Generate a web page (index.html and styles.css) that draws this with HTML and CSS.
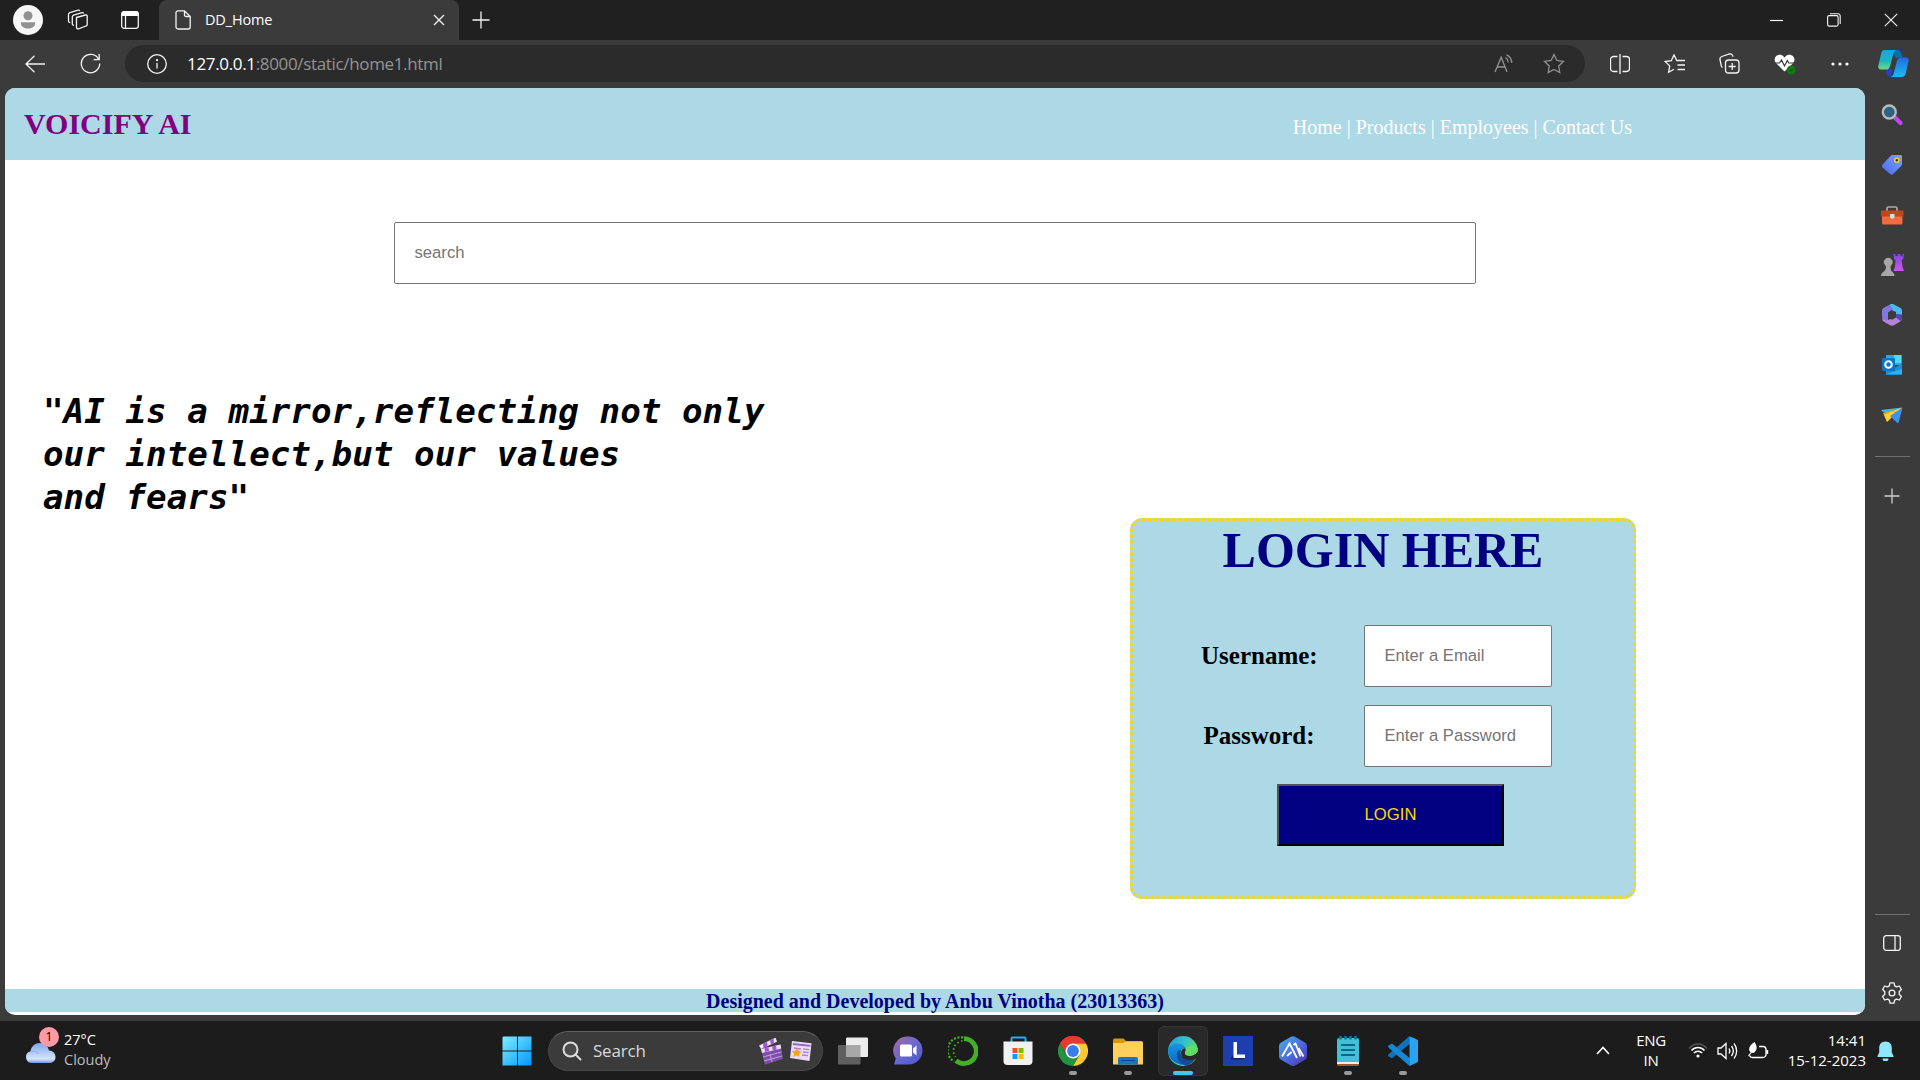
FILE: index.html
```html
<!DOCTYPE html>
<html lang="en">
<head>
<meta charset="utf-8">
<title>DD_Home</title>
<link rel="stylesheet" href="styles.css">
</head>
<body>
<div class="titlebar">
  <div class="tb-cell avatar"><svg width="30" height="30" viewBox="0 0 30 30"><circle cx="15" cy="15" r="15" fill="#f7f7f7"/><circle cx="15" cy="10.7" r="4.5" fill="#919191"/><path d="M8 17.3h14v1.2c0 3.300-3.100 5-7 5s-7-1.700-7-5z" fill="#919191"/></svg></div>
  <div class="tb-cell spaces"><svg width="22" height="22" viewBox="0 0 22 22" class="line"><path d="M9.500 8.500l9-2.500c1-.2 1.700.2 1.700 1.200v8.300c0 .8-.4 1.300-1.200 1.500l-7.500 2.800c-1 .3-2-.2-2-1.200z"/><path d="M7 16.500l-.8-.3c-.7-.2-.9-.7-.9-1.400V8c0-1 .4-1.600 1.300-1.900l8.400-2.400c.8-.2 1.400.1 1.700.8"/><path d="M3.300 13.700l-.9-.4c-.7-.2-.9-.7-.9-1.300V5.500c0-1 .4-1.500 1.300-1.800L11 1.200c.8-.2 1.400 0 1.800.7"/></svg></div>
  <div class="tb-cell actions"><svg width="18" height="18" viewBox="0 0 18 18"><rect x=".7" y=".7" width="16.600" height="16.600" rx="2.500" class="line"/><path d="M.5 2.500A2 2 0 012.500.3h13a2 2 0 012 2.200V5H.5z" fill="#fff"/><path d="M4.500 5v12" class="line"/></svg></div>
  <div class="tab">
    <svg width="16" height="20" viewBox="0 0 16 20" class="line"><path d="M3 .8h6.500l5.700 5.700V17a2 2 0 01-2 2H3a2 2 0 01-2-2V2.800a2 2 0 012-2zM9.500.8V5a1.500 1.500 0 001.500 1.500h4.200"/></svg>
    <span class="tab-title">DD_Home</span>
    <svg width="12" height="12" viewBox="0 0 12 12" class="line"><path d="M1 1l10 10M11 1L1 11"/></svg>
  </div>
  <div class="newtab"><svg width="18" height="18" viewBox="0 0 18 18" class="line"><path d="M9 .5v17M.5 9h17"/></svg></div>
  <div class="win"><svg width="13" height="13" viewBox="0 0 13 13"><path d="M0 6.500h13" stroke="#fff" stroke-width="1.200"/></svg></div>
  <div class="win"><svg width="14" height="14" viewBox="0 0 14 14" class="line thin"><rect x=".6" y="2.600" width="10.500" height="10.500" rx="1.500"/><path d="M3 .8h8a2.200 2.200 0 012.200 2.200v8"/></svg></div>
  <div class="win"><svg width="14" height="14" viewBox="0 0 14 14" class="line thin"><path d="M.8.8l12.400 12.400M13.200.8L.8 13.200"/></svg></div>
</div>

<div class="toolbar">
  <div class="nav-cell back"><svg width="20" height="18" viewBox="0 0 20 18" class="line"><path d="M20 9H1M9.500.8L1 9l8.500 8.200"/></svg></div>
  <div class="nav-cell reload"><svg width="21" height="21" viewBox="0 0 21 21" class="line"><path d="M18.800 6.600A9.200 9.200 0 1019.700 10.500M19.200 1v5.600h-5.600"/></svg></div>
  <div class="address">
    <svg width="20" height="20" viewBox="0 0 20 20" class="line"><circle cx="10" cy="10" r="9.300"/><path d="M10 9v5.500"/><circle cx="10" cy="6.200" r=".5" fill="#fff"/></svg>
    <span class="url">127.0.0.1<span class="dim">:8000/static/home1.html</span></span>
    <div class="addr-icon"><svg width="20" height="20" viewBox="0 0 20 20" class="line grey"><path d="M1 18L7.200 3.200 13 18M3 13h8"/><path d="M11.500 3.500c1.800 1 2.600 2.500 2.800 5M12.500.8c3.300 1.400 5 4 5.300 7.800" /></svg></div>
    <div class="addr-icon"><svg width="22" height="21" viewBox="0 0 22 21" class="line grey"><path d="M11 1.500l2.900 6 6.500.9-4.700 4.600 1.100 6.500L11 16.400l-5.800 3.100 1.100-6.500L1.600 8.400l6.500-.9z"/></svg></div>
  </div>
  <div class="tools">
    <div class="tool"><svg width="20" height="20" viewBox="0 0 20 20" class="line"><path d="M7.500 2.500h-4a3 3 0 00-3 3v9a3 3 0 003 3h4M12.500 2.500h4a3 3 0 013 3v9a3 3 0 01-3 3h-4M10 0v20"/></svg></div>
    <div class="tool"><svg width="22" height="20" viewBox="0 0 22 20" class="line"><path d="M14 6.500h-1.200L10 .9 7.300 6.700l-6.200.8 4.600 4.400-1.100 6.400L10 15.200M14 6.500h7M13.500 11h7.500M13.500 15.500h7.500"/></svg></div>
    <div class="tool"><svg width="21" height="21" viewBox="0 0 21 21" class="line"><rect x="6.500" y="7" width="13.500" height="13" rx="3"/><path d="M13.200 10v7M9.700 13.500h7M3.500 14.500c-.8-.4-1-1-1.200-1.600L1 6.500C.7 5 1.400 4 2.800 3.500L10.500 1c1.600-.4 2.600.2 3.100 1.600l.4 1.200"/></svg></div>
    <div class="tool"><svg width="22" height="22" viewBox="0 0 22 22"><path d="M10.500 18.500L2.200 10.300A5 5 0 012 3.200c2-2 5.500-2 7.300 0l1.200 1.200 1.200-1.200c2-2 5.300-2 7.300 0a5 5 0 010 7.100z" fill="#fff"/><path d="M0 10h5.500l2-3 3 6 2.800-5.500 1.500 2.500h6" fill="none" stroke="#3b3b3b" stroke-width="1.200"/><circle cx="17.300" cy="17" r="4.500" fill="#107c10"/><path d="M15.300 17l1.500 1.500 2.700-3" stroke="#174f17" fill="none"/></svg></div>
    <div class="tool"><svg width="18" height="4" viewBox="0 0 18 4" fill="#fff"><circle cx="2" cy="2" r="1.600"/><circle cx="9" cy="2" r="1.600"/><circle cx="16" cy="2" r="1.600"/></svg></div>
    <div class="tool"><svg width="31" height="27" viewBox="0 0 31 27"><defs><linearGradient id="cpA" x1="0" y1="0" x2="0" y2="1"><stop offset="0" stop-color="#13a5e6"/><stop offset=".55" stop-color="#1db6bd"/><stop offset="1" stop-color="#6ddb86"/></linearGradient><linearGradient id="cpB" x1="0" y1="0" x2="0" y2="1"><stop offset="0" stop-color="#2169e0"/><stop offset="1" stop-color="#16bdf5"/></linearGradient></defs><path d="M15 0h4.500c2 0 3 1 3.500 3l1.500 4-7 1z" fill="#0b6fae"/><path d="M8.500 18l6 1-2 7.500c-2 0-3.500-.5-4-2.500z" fill="#1a46c9"/><path d="M6.500 0H18c-1.700 1-2.400 3-3 5.200l-3 11c-.8 2.600-1.800 3.300-4 3.300H3c-2.500 0-3.200-2-2.500-4.500L3 4C3.600 1.400 4.500 0 6.500 0z" fill="url(#cpA)"/><path d="M23 7.500h5c2.300 0 3 1.500 2.500 4l-2.500 11c-.7 3-2 4.500-4.500 4.500H12.500c2.300-.8 3-2.500 3.600-5l2.700-10.500c.7-2.800 1.800-4 4.200-4z" fill="url(#cpB)"/></svg></div>
  </div>
</div>

<div class="workarea">
  <main class="page">
    <header class="site-head">
      <h1 class="brand">VOICIFY AI</h1>
      <nav class="menu">Home | Products | Employees | Contact Us</nav>
    </header>
    <input class="field search" placeholder="search">
    <p class="quote">"AI is a mirror,reflecting not only<br>our intellect,but our values<br>and fears"</p>
    <form class="login">
      <h2 class="login-title">LOGIN HERE</h2>
      <div class="row"><label class="label">Username:</label><input class="field entry" placeholder="Enter a Email"></div>
      <div class="row"><label class="label">Password:</label><input class="field entry" placeholder="Enter a Password"></div>
      <button class="submit" type="button">LOGIN</button>
    </form>
    <footer class="site-foot">Designed and Developed by Anbu Vinotha (23013363)</footer>
  </main>
  <aside class="sidebar">
    <div class="side"><svg width="22" height="22" viewBox="0 0 22 22"><path d="M14 13.500l5.500 5.500" stroke="#bf45f5" stroke-width="4.200" stroke-linecap="round"/><circle cx="8.300" cy="8" r="6.500" fill="#2b6385" stroke="#b9b9b9" stroke-width="2.300"/></svg></div>
    <div class="side"><svg width="22" height="22" viewBox="0 0 22 22"><defs><linearGradient id="tag" x1="1" y1="0" x2="0" y2="1"><stop offset="0" stop-color="#6cabff"/><stop offset="1" stop-color="#5262ef"/></linearGradient></defs><path d="M11.500 1h7.800c1 0 1.700.7 1.700 1.700v7c0 1-.2 1.500-.9 2.200l-8 8c-1 1-2 1-3 0l-7.500-6.500c-1-1-1-2 0-3L9.500 2c.6-.7 1.100-1 2-1z" fill="url(#tag)"/><circle cx="15.800" cy="6.300" r="2" fill="#333" stroke="#f5cf1c" stroke-width="1.600"/></svg></div>
    <div class="side"><svg width="24" height="20" viewBox="0 0 24 20"><path d="M7 6V3.500A1.500 1.500 0 018.500 2h7A1.500 1.500 0 0117 3.500V6" fill="none" stroke="#aaa" stroke-width="1.700"/><rect x="2" y="7" width="20.500" height="12.500" rx="1.500" fill="#ef6c43"/><rect x="1" y="5.500" width="22.500" height="6" rx="1" fill="#cb4318"/><path d="M10 9h4.500v3.500L12.200 14 10 12.500z" fill="#ddd"/></svg></div>
    <div class="side"><svg width="24" height="24" viewBox="0 0 24 24"><defs><linearGradient id="rook" x1="0" y1="0" x2="0" y2="1"><stop offset="0" stop-color="#7f45d7"/><stop offset="1" stop-color="#ca57f7"/></linearGradient></defs><path d="M13.500 1h2v2h2V1h3v2h2V1H24l-.8 5-1.400 1 .7 7 1.500 4H13.500l1.500-4 .5-7-1.500-1z" fill="url(#rook)"/><path d="M5 12a4.300 4.300 0 116.500 0l-1 1.500c0 3 .6 4.500 2.300 6 1.200 1 1.700 1.800 1.700 3.500H1c0-1.700.5-2.500 1.700-3.500C5 18 6 16.500 6 13.500z" fill="#a7a7a7"/></svg></div>
    <div class="side"><svg width="22" height="22" viewBox="0 0 22 22"><path d="M9 .5c1.300-.6 2.700-.6 4 0L19.500 4C20.500 4.600 21 5.500 21 7v7.500l-6-3V8L8 5z" fill="#49b9f0"/><path d="M9 .5L12 5l-5 3.500V17c-3.500 0-6-2-6-5V7c0-1.300.5-2.300 1.500-2.900z" fill="#8078dc"/><path d="M1 13c1 3 4 4.300 7.500 2.500l6.500-4 6 3c0 1.500-.6 2.400-1.800 3L13 21.300c-1.300.6-2.700.6-4 0L2.500 17.500C1.500 16.800 1 15.500 1 13z" fill="#b284d5"/><path d="M15 10l6 .5V14c0 1.500-.6 2.400-1.500 3L15 13.500z" fill="#5b43ae"/><path d="M11 7l4 2.300v4.200L11 15.800l-3.700-2.300V9.300z" fill="#3b3b3b"/></svg></div>
    <div class="side"><svg width="22" height="22" viewBox="0 0 22 22"><path d="M5 1h15.500v10H5z" fill="#28a8ea"/><path d="M13 1h7.500v8H13z" fill="#50d9ff"/><path d="M5 11l8 3 8-4.500V20.500H5z" fill="#1490df"/><path d="M4 20.500h17V15z" fill="#28b5f4"/><rect x="1" y="4" width="13" height="13" rx="1.200" fill="#0875cf"/><circle cx="7.500" cy="10.500" r="3.300" fill="none" stroke="#fff" stroke-width="2"/></svg></div>
    <div class="side"><svg width="24" height="20" viewBox="0 0 24 20"><path d="M1 5l21-2.500L9 12z" fill="#38b8ef"/><path d="M3 8L22 3 7 11v6z" fill="#d89b0a"/><path d="M4 9.500l18-7L7 17z" fill="#ffce33"/><path d="M22.500 2.500L10 11l7 6.800c1 .4 1.500.2 1.800-.8z" fill="#3b93ef"/></svg></div>
    <div class="rule first"></div>
    <div class="side add"><svg width="16" height="16" viewBox="0 0 16 16" class="line pale"><path d="M8 .5v15M.5 8h15"/></svg></div>
    <div class="rule second"></div>
    <div class="side"><svg width="18" height="16" viewBox="0 0 18 16" class="line"><rect x=".7" y=".7" width="16.600" height="14.600" rx="2.500"/><path d="M12 .7v14.600"/></svg></div>
    <div class="side"><svg width="22" height="22" viewBox="0 0 22 22" class="line"><circle cx="11" cy="11" r="2.900"/><path d="M9 .9h4l.7 3 1.700 1 3-.9 2 3.500-2.200 2.200v2.600l2.200 2.200-2 3.500-3-.9-1.700 1-.7 3H9l-.7-3-1.700-1-3 .9-2-3.500 2.200-2.200V9.700L1.600 7.500l2-3.500 3 .9 1.700-1z" stroke-linejoin="round"/></svg></div>
  </aside>
</div>

<div class="taskbar">
  <div class="weather">
    <svg width="31" height="31" viewBox="0 0 31 31"><defs><linearGradient id="cloud" x1="0" y1="0" x2="0" y2="1"><stop offset="0" stop-color="#7da7ee"/><stop offset=".8" stop-color="#d7e4fa"/><stop offset="1" stop-color="#7096e8"/></linearGradient></defs><path d="M7 28a6 6 0 01-1.500-11.800C6.500 11 10 8 15 8c4.800 0 8 3 9 7.500 4 .2 6.500 3 6.500 6.500s-2.500 6-6 6z" fill="url(#cloud)"/><path d="M6 17c3-1.500 5.500-.5 7.500 2" stroke="#86a9e8" fill="none"/></svg>
    <span class="badge">1</span>
    <div class="temps"><div>27°C</div><div class="sky">Cloudy</div></div>
  </div>
  <div class="app"><svg width="30" height="30" viewBox="0 0 30 30"><defs><linearGradient id="win" x1="0" y1="0" x2="1" y2="1"><stop offset="0" stop-color="#7af0ff"/><stop offset="1" stop-color="#0795fb"/></linearGradient></defs><path d="M1.500.5H15v14H.5v-13zM16 .5h13.500v14H16zM.5 15.500H15v14H.5zM16 15.500h13.500v14H16z" fill="url(#win)"/></svg></div>
  <div class="find">
    <svg width="20" height="20" viewBox="0 0 20 20" fill="none" stroke="#ddd" stroke-width="2"><circle cx="8.500" cy="8.500" r="7" fill="#4b4b4b"/><path d="M13.500 13.500l5 5" stroke-linecap="round"/></svg>
    <span class="find-text">Search</span>
    <svg width="26" height="28" viewBox="0 0 26 28"><path d="M1 8.500L17.500.8l1.500 4L3 12z" fill="#f1e4fb"/><path d="M5 6.500l4-2 .5 4.700-4 2zM12 3.300l3.500-1.600.5 4.500L13 7.500z" fill="#9f58cf"/><path d="M3 12l19.500-4.500L25 22 7 27.500z" fill="#7d50a8"/><path d="M3 12l19.500-4.500.8 4L4 16z" fill="#eadcf7"/><path d="M6.500 11.200l4-1 .5 4-4 .9zM14 9.500l4-1 .6 4-3.600.9z" fill="#9f58cf"/><path d="M5 20l18.500-5M6 24l18-5M12 17l2 8" stroke="#c2a0e0" fill="none"/></svg>
    <svg width="23" height="22" viewBox="0 0 23 22"><path d="M3 1l19.500 2.200L20.500 21 1 18z" fill="#e9dbf4"/><path d="M4 3l17.500 2-.2 1.800L3.800 5z" fill="#9664c5"/><path d="M5 8l7 1M14 8.800l6 .8M14 12l5.500.7M13 15l6 .7" stroke="#a982c9" stroke-width="1.300"/><path d="M8 8l1.300 2.800 3.200.7-2.500 2 .3 3.300-2.800-1.500-3 1.400.6-3.200-2.300-2.400 3.300-.4z" fill="#f7a416"/></svg>
  </div>
  <div class="app"><svg width="30" height="28" viewBox="0 0 30 28"><rect y="8" width="22.500" height="19.500" rx="1" fill="#606060"/><rect x="8" y=".5" width="22" height="19.500" rx="1" fill="#ececec"/><path d="M8 8h14.500v12H8z" fill="#a7a7a7"/></svg></div>
  <div class="app"><svg width="30" height="29" viewBox="0 0 30 29"><defs><linearGradient id="chat" x1="0" y1="0" x2="1" y2="1"><stop offset="0" stop-color="#a36a98"/><stop offset=".5" stop-color="#6b68d0"/><stop offset="1" stop-color="#4657ce"/></linearGradient></defs><path d="M15.500.5a14 14 0 110 28H1l1.800-6A14 14 0 0115.500.5z" fill="url(#chat)"/><rect x="7" y="8.500" width="12" height="12" rx="1.500" fill="#fff"/><path d="M20 12.500l3.500-3v10l-3.500-3z" fill="#fff"/></svg></div>
  <div class="app"><svg width="30" height="30" viewBox="0 0 30 30" fill="none" stroke="#43b02a"><path d="M16 2.700a12.400 12.400 0 11-8 22" stroke-width="4.800"/><path d="M15 1.500a13 13 0 00-9 24" stroke-width="2.300" stroke-dasharray="2 1.600"/><path d="M14.500 5a10 10 0 00-7 16" stroke-width="1.800" stroke-dasharray="1.500 2.500"/></svg></div>
  <div class="app"><svg width="30" height="30" viewBox="0 0 30 30"><path d="M8.500 6V2.500a1 1 0 011-1h12a1 1 0 011 1V6" fill="none" stroke="#22aef0" stroke-width="2"/><path d="M.5 5.500h29V25a4 4 0 01-4 4h-21a4 4 0 01-4-4z" fill="#f1f1f1"/><path d="M9.500 12h5v5h-5z" fill="#f25022"/><path d="M15.500 12h5v5h-5z" fill="#7fba00"/><path d="M9.500 18h5v5h-5z" fill="#00a4ef"/><path d="M15.500 18h5v5h-5z" fill="#ffb900"/></svg></div>
  <div class="app run"><svg width="30" height="30" viewBox="0 0 30 30"><path d="M15 15L2 7.500A15 15 0 0128 7.500z" fill="#e33b2e"/><path d="M15 7.500h13A15 15 0 0115 30l6.500-11.300z" fill="#fcc934"/><path d="M2 7.500l6.500 11.200L21.500 18.700 15 30A15 15 0 012 7.500z" fill="#229342"/><path d="M15 7.500h13A15 15 0 002 7.500l6 10z" fill="#e33b2e"/><circle cx="15" cy="15" r="7.500" fill="#fff"/><circle cx="15" cy="15" r="5.900" fill="#3a7cec"/></svg></div>
  <div class="app run"><svg width="30" height="28" viewBox="0 0 30 28"><path d="M0 3a1.500 1.500 0 011.500-1.500h9L13 4h15a2 2 0 012 2v10H0z" fill="#dc9700"/><path d="M0 6h10l3-1.500h15.500A1.500 1.500 0 0130 6v21.500H0z" fill="#ffd15c"/><path d="M5 27.500V22a2 2 0 012-2h16a2 2 0 012 2v5.500z" fill="#1375ce"/><path d="M8 23.500h14" stroke="#084a8c"/></svg></div>
  <div class="app run current"><svg width="30" height="30" viewBox="0 0 30 30"><defs><linearGradient id="edT" x1="0" y1="0" x2="1" y2=".6"><stop offset="0" stop-color="#209bdc"/><stop offset=".5" stop-color="#35c1c8"/><stop offset="1" stop-color="#70e34c"/></linearGradient><linearGradient id="edL" x1="0" y1="0" x2="0" y2="1"><stop offset="0" stop-color="#1597e0"/><stop offset="1" stop-color="#0a68c4"/></linearGradient></defs><circle cx="15" cy="15" r="15" fill="url(#edT)"/><path d="M0 14C2 8 8 6 13 8c3.500 1.300 5 4 5 5.500-1-1.500-5-2-6 2-1 4.500 3 9 8 9 3 0 5-.8 7.500-2.500A15 15 0 010 14z" fill="url(#edL)"/><path d="M10.500 14c-3.500 5-.5 13 7 15.800A15 15 0 0027.500 22c-3 1.500-6 2-9 1-5-1.500-7-5.500-5.500-9z" fill="#134b95"/><path d="M17.500 13c1.500 2-.5 3.200-.5 4.500 0 1.700 3 3 6.500 2.200 3-.7 5.500-2.700 6.500-5v7l-2.500 1.300c-7 2.800-14 .5-14.500-5.500-.3-4 3-6 4.500-4.500z" fill="#292929"/><path d="M18 12c0 2-1 3-1 5 0 2 4 3.200 7.500 2.200 3-1 5.500-3.200 5.500-6.500L24 9z" fill="#61dd65"/></svg></div>
  <div class="app"><svg width="30" height="30" viewBox="0 0 30 30"><rect width="30" height="30" fill="#1d3eb0"/><path d="M8 22l3-4v3.500h10l-1 2H8z" fill="#0b2663"/><path d="M10.500 6H14v12.500h8V22H10.500z" fill="#fff"/></svg></div>
  <div class="app"><svg width="30" height="30" viewBox="0 0 30 30"><defs><linearGradient id="hex" x1="0" y1="0" x2="1" y2="1"><stop offset="0" stop-color="#46aef1"/><stop offset=".55" stop-color="#4d68dc"/><stop offset="1" stop-color="#4c2bb2"/></linearGradient></defs><path d="M13 .8a4 4 0 014 0l10 5.800a4 4 0 012 3.400v10.500a4 4 0 01-2 3.300l-10 5.700a4 4 0 01-4 0l-10-5.700a4 4 0 01-2-3.300V10a4 4 0 012-3.400z" fill="url(#hex)"/><path d="M4 20.500L11.500 7.500l7.500 14.500M9 20l4.500-4M15.500 9l2-1.500 5 13M20.500 12l5 8.500" fill="none" stroke="#fff" stroke-width="1.800"/></svg></div>
  <div class="app run"><svg width="24" height="30" viewBox="0 0 24 30"><rect x="1" y="24" width="22" height="6" rx="1.500" fill="#a65726"/><rect x="1" y="22" width="22" height="6" fill="#e8f0f2"/><path d="M1 4a2 2 0 012-2h18a2 2 0 012 2v22H1z" fill="#45bfd5"/><path d="M5 9h14M5 14h14M5 19h14" stroke="#066a86" stroke-width="1.800"/><path d="M4.500 0v3.500M9.500 0v3.500M14.500 0v3.500M19.500 0v3.500" stroke="#0f7893" stroke-width="2.500"/></svg></div>
  <div class="app run"><svg width="30" height="30" viewBox="0 0 30 30"><path d="M22 7.800L4 22.300.6 20.500c-.8-.7-.8-1.500 0-2.200L21.500 0z" fill="#0f73b9"/><path d="M22 22.200L4 7.500.6 9.500c-.8.700-.8 1.500 0 2.200L21.500 30z" fill="#1687d2"/><path d="M21.500.2L29 3.500a1.500 1.500 0 011 1.500v20a1.500 1.500 0 01-1 1.500L21.500 30z" fill="#29a4f2"/></svg></div>
  <div class="tray">
    <svg class="t-up" width="14" height="9" viewBox="0 0 14 9" fill="none" stroke="#fff" stroke-width="1.700"><path d="M1 8l6-6.500L13 8"/></svg>
    <div class="lang">ENG<br>IN</div>
    <svg class="t-wifi" width="20" height="17" viewBox="0 0 20 17" fill="none" stroke="#fff" stroke-width="1.500"><path d="M1 6.500C6 .5 14 .5 19 6.500" stroke="#555"/><path d="M3.500 8.500c3.700-4 9.300-4 13 0M5.800 11c2.500-2.500 5.900-2.500 8.400 0"/><circle cx="10" cy="14" r="1.600" fill="#fff" stroke="none"/></svg>
    <svg class="t-vol" width="21" height="18" viewBox="0 0 21 18" fill="none" stroke="#fff" stroke-width="1.300"><path d="M1 6h3l5-4.500v15L4 12H1zM12 6.500c1 1.500 1 3.500 0 5M14.500 4c2.200 3 2.200 7 0 10M17 1.500c3.500 4.500 3.500 10.500 0 15"/></svg>
    <svg class="t-bat" width="22" height="18" viewBox="0 0 22 18" fill="none" stroke="#fff" stroke-width="1.400"><path d="M12 4.500h4a3 3 0 013 3v5a3 3 0 01-3 3H5.500a3 3 0 01-3-2M20.500 8v4"/><path d="M7.500 0C10.500 4.500 10.500 8.500 6.500 11 .5 10.500.5 4.500 7.500 0z" fill="#fff" stroke="none"/><path d="M6 8L1.500 14" stroke-width="1.200"/></svg>
    <div class="clock">14:41<br>15-12-2023</div>
    <svg class="t-bell" width="17" height="20" viewBox="0 0 17 20" fill="#8ee7ff"><path d="M8.500.5c-4 0-6.300 2.800-6.300 6.500v4.500L.5 15v1h16v-1l-1.700-3.500V7c0-3.700-2.300-6.500-6.300-6.500zM5.500 17.500h6a3 3 0 01-6 0z"/></svg>
  </div>
</div>
</body>
</html>
```
FILE: styles.css
```css
* { box-sizing: border-box; }
body {
  margin: 0;
  width: 1920px;
  height: 1080px;
  overflow: hidden;
  display: flex;
  flex-direction: column;
  background: #3b3b3b;
  color: #fff;
  font-family: "Open Sans", "Noto Sans", sans-serif;
}
svg { display: block; flex: none; }
.line { fill: none; stroke: #f4f4f4; stroke-width: 1.3; }
.thin { stroke-width: 1.1; }
.grey { stroke: #929292; }
.pale { stroke: #d0d0d0; }

/* window title bar */
.titlebar { display: flex; height: 40px; background: #202020; flex: none; }
.tb-cell { display: flex; align-items: center; justify-content: center; }
.avatar { width: 56px; }
.spaces { width: 43px; }
.actions { width: 60px; padding-left: 2px; }
.tab {
  width: 300px;
  display: flex;
  align-items: center;
  padding: 0 14px 0 16px;
  background: #3b3b3b;
  border-radius: 8px 8px 0 0;
}
.tab-title { flex: 1; padding: 0 0 2px 14px; font-size: 14.5px; letter-spacing: -.15px; }
.newtab { width: 43px; margin-right: auto; display: flex; align-items: center; justify-content: center; }
.win { width: 57.500px; display: flex; align-items: center; justify-content: center; }

/* navigation bar */
.toolbar { display: flex; align-items: center; height: 48px; flex: none; padding-bottom: 1px; }
.nav-cell { display: flex; justify-content: center; }
.back { width: 70px; }
.reload { width: 40px; margin-right: 15px; }
.address {
  width: 1460px;
  height: 37px;
  display: flex;
  align-items: center;
  padding: 0 6px 0 22px;
  border-radius: 19px;
  background: #2b2b2b;
}
.url { flex: 1; padding: 0 0 1px 20px; font-size: 17px; letter-spacing: -.34px; }
.dim { color: #949494; }
.addr-icon { width: 50px; display: flex; justify-content: center; }
.tools { flex: 1; display: flex; align-items: center; padding-left: 7px; }
.tool { width: 55px; display: flex; justify-content: center; }
.tool:last-child { width: 53px; }

/* browser content */
.workarea { display: flex; height: 933px; flex: none; padding-left: 5px; }
.page {
  width: 1860px;
  height: 927px;
  overflow: hidden;
  display: flex;
  flex-direction: column;
  border-radius: 10px;
  background: #fff;
  color: #000;
  font-family: "Liberation Serif", serif;
}
.site-head {
  display: flex;
  justify-content: space-between;
  height: 72px;
  flex: none;
  padding: 0 233px 0 19px;
  background: lightblue;
}
.brand { margin: 19px 0 0; font-size: 30px; line-height: 34px; color: purple; }
.menu { margin-top: 28px; font-size: 20px; line-height: 23px; color: #fff; }
.field {
  display: block;
  height: 62px;
  padding: 0 19.500px;
  border: 1px solid #767676;
  border-radius: 2px;
  background: #fff;
  font: 16.667px "Liberation Sans", sans-serif;
}
.field::placeholder { color: #757575; }
.search { width: 1082px; margin: 62px 0 0 389px; flex: none; }
.quote {
  margin: 106px 0 0 38px;
  font: italic bold 34.200px/43px "DejaVu Sans Mono", monospace;
  letter-spacing: .03px;
}
.login {
  width: 506px;
  height: 381px;
  flex: none;
  margin: -1px 0 0 1125px;
  border: 3px dotted gold;
  border-radius: 12px;
  background: lightblue;
}
.login-title { margin: 0 0 46px; padding-top: 1px; font-size: 50px; line-height: 57px; text-align: center; color: navy; }
.row { display: flex; align-items: center; margin-bottom: 17.500px; }
.label { width: 116px; margin: 0 47px 0 68px; font-size: 25px; font-weight: bold; text-align: center; }
.entry { width: 188px; }
.submit {
  display: block;
  width: 227px;
  height: 62px;
  margin-left: 144px;
  padding: 0;
  border: 2px outset #000;
  border-radius: 0;
  background: navy;
  color: gold;
  font: 16.667px "Liberation Sans", sans-serif;
}
.site-foot {
  height: 23px;
  margin: auto 0 3px;
  background: lightblue;
  color: navy;
  font-size: 20px;
  font-weight: bold;
  line-height: 24px;
  text-align: center;
}

/* browser sidebar */
.sidebar { width: 55px; display: flex; flex-direction: column; align-items: center; padding: 2px 0 3px; }
.side { height: 50px; display: flex; align-items: center; justify-content: center; padding-right: 1px; }
.rule { width: 35px; height: 1px; background: #707070; }
.first { margin: 16px 0 14px; }
.second { margin: auto 0 3px; }

/* taskbar */
.taskbar { display: flex; align-items: center; height: 59px; background: #1c1c1c; flex: none; }
.weather { position: relative; width: 489px; display: flex; align-items: center; padding-left: 25px; }
.badge {
  position: absolute;
  left: 39px;
  top: -3px;
  width: 20px;
  height: 20px;
  border-radius: 50%;
  background: #ff99a4;
  color: #000;
  font-size: 12px;
  line-height: 20px;
  text-align: center;
}
.temps { padding: 0 0 2px 8px; font-size: 14.500px; line-height: 20px; }
.sky { color: #bdbdbd; }
.app { position: relative; width: 55px; height: 50px; display: flex; align-items: center; justify-content: center; }
.run::after {
  content: "";
  position: absolute;
  left: 23.500px;
  bottom: 1px;
  width: 8px;
  height: 4px;
  border-radius: 2px;
  background: #999;
}
.current { width: 50px; margin: 0 2.500px; border-radius: 6px; background: #292929; box-shadow: inset 0 0 0 1px #333; }
.current::after { left: 15px; width: 20px; background: #4cc2ff; }
.find {
  width: 275px;
  height: 40px;
  display: flex;
  align-items: center;
  margin: 0 2.500px 0 4px;
  padding: 0 10px 0 13px;
  border: 1px solid #484848;
  border-top-color: #606060;
  border-radius: 20px;
  background: #3b3b3b;
}
.find-text { flex: 1; padding: 0 0 1px 11px; font-size: 17px; letter-spacing: -.2px; color: #d8d8d8; }
.find svg:last-child { margin-left: 5px; }
.tray { margin-left: auto; display: flex; align-items: center; font-size: 15px; line-height: 20px; padding-right: 26px; }
.lang { width: 40px; margin: 0 17px 0 21px; padding-bottom: 2px; text-align: center; letter-spacing: -.3px; }
.t-wifi { margin-right: 9px; }
.t-vol { margin-right: 9px; }
.clock { width: 84px; margin: 0 11px 0 13px; padding-bottom: 2px; text-align: right; white-space: nowrap; letter-spacing: 0; }
```
